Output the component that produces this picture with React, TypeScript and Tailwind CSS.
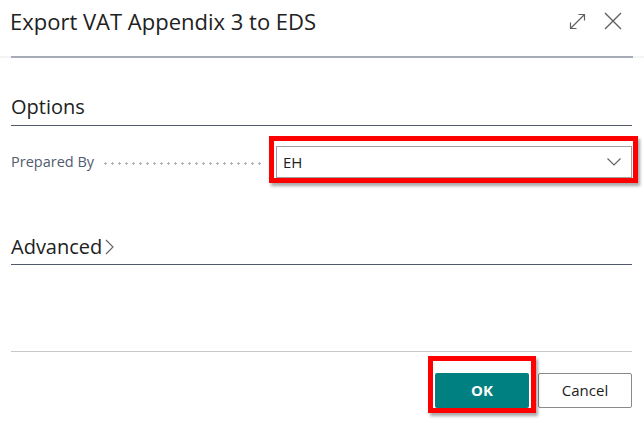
import React from 'react';

const App = () => {
  return (
    <div className="w-[644px] h-[423px] bg-white flex flex-col text-[#212121] font-['Open_Sans',sans-serif] overflow-hidden">
      {/* Header */}
      <div className="h-[42px] flex items-center justify-between pl-[10px] pr-[22px]">
        <h1 className="text-[22px] leading-[28px]">Export VAT Appendix 3 to EDS</h1>
        <div className="flex items-center gap-[18px] text-[#616161]">
          <svg width="17" height="17" viewBox="0 0 17 17" fill="none" stroke="currentColor" strokeWidth="1.2">
            <path d="M1.5 15.5 L15.5 1.5" />
            <path d="M9.5 1.5 H15.5 V7.5" />
            <path d="M1.5 9.5 V15.5 H7.5" />
          </svg>
          <svg width="18" height="18" viewBox="0 0 18 18" fill="none" stroke="currentColor" strokeWidth="1.4">
            <path d="M1 1 L17 17 M17 1 L1 17" />
          </svg>
        </div>
      </div>
      <div className="mt-[14px] h-[2px] bg-[#f4f4f4] px-[11px]">
        <div className="h-[2px] bg-[#a6abb5]" />
      </div>

      {/* Options */}
      <div className="pl-[11px] pr-[12px]">
        <div className="mt-[35px] pb-[5px] border-b border-[#505a6a]">
          <h2 className="text-[20px] leading-[27px]">Options</h2>
        </div>

        <div className="mt-[20px] h-[32px] flex items-center">
          <span className="text-[14.5px] text-[#505c6d] pr-[8px]">Prepared By</span>
          <div className="flex-1 h-[3px] mt-[2px] mr-[14px] bg-[radial-gradient(circle,#b4b4b4_1px,transparent_1.2px)] bg-[length:7px_3px]" />
          <div className="relative w-[356px] h-[32px]">
            <div className="h-full border border-[#a0a0a0] bg-white flex items-center justify-between pl-[6px] pr-[10px]">
              <span className="text-[15px]">EH</span>
              <svg width="14" height="8" viewBox="0 0 14 8" fill="none" stroke="#616161" strokeWidth="1.1">
                <path d="M0.5 0.5 L7 7 L13.5 0.5" />
              </svg>
            </div>
            <div className="absolute left-[-7px] right-[-6px] top-[-10px] bottom-[-5px] border-[5px] border-[#ff0000] shadow-[2px_3px_3px_rgba(0,0,0,0.35)] pointer-events-none" />
          </div>
        </div>

        {/* Advanced */}
        <div className="mt-[55px] pb-[4px] border-b border-[#505a6a] flex items-center gap-[3px]">
          <h2 className="text-[20px] leading-[27px]">Advanced</h2>
          <svg width="9" height="16" viewBox="0 0 9 16" fill="none" stroke="#616161" strokeWidth="1.1">
            <path d="M1 1 L8 8 L1 15" />
          </svg>
        </div>

        {/* Footer */}
        <div className="mt-[86px] border-t border-[#c8c8c8]" />
        <div className="mt-[21px] flex justify-end gap-[9px]">
          <div className="relative">
            <button className="w-[94px] h-[35px] bg-[#008080] text-white text-[15px] font-bold rounded-[2px]">OK</button>
            <div className="absolute left-[-7px] right-[-7px] top-[-17px] bottom-[-5px] border-[5px] border-[#ff0000] shadow-[2px_3px_3px_rgba(0,0,0,0.35)] pointer-events-none" />
          </div>
          <button className="w-[94px] h-[35px] bg-white border border-[#8a8a8a] text-[15px] rounded-[2px]">Cancel</button>
        </div>
      </div>
    </div>
  );
};

export default App;
